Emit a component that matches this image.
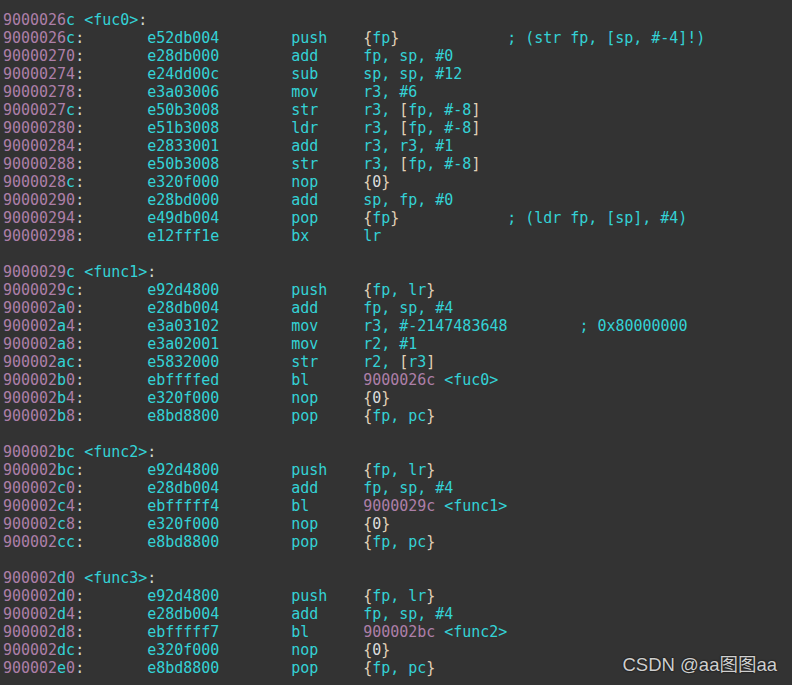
type Instr = {
  addr: string;
  bytes: string;
  mn: string;
  ops: string;
  target?: { addr: string; name: string };
  comment?: string;
  commentCol?: number;
};

type Block = { addr: string; name: string; rows: Instr[] };

const blocks: Block[] = [
  {
    addr: "9000026c",
    name: "fuc0",
    rows: [
      { addr: "9000026c", bytes: "e52db004", mn: "push", ops: "{fp}", comment: "; (str fp, [sp, #-4]!)", commentCol: 56 },
      { addr: "90000270", bytes: "e28db000", mn: "add", ops: "fp, sp, #0" },
      { addr: "90000274", bytes: "e24dd00c", mn: "sub", ops: "sp, sp, #12" },
      { addr: "90000278", bytes: "e3a03006", mn: "mov", ops: "r3, #6" },
      { addr: "9000027c", bytes: "e50b3008", mn: "str", ops: "r3, [fp, #-8]" },
      { addr: "90000280", bytes: "e51b3008", mn: "ldr", ops: "r3, [fp, #-8]" },
      { addr: "90000284", bytes: "e2833001", mn: "add", ops: "r3, r3, #1" },
      { addr: "90000288", bytes: "e50b3008", mn: "str", ops: "r3, [fp, #-8]" },
      { addr: "9000028c", bytes: "e320f000", mn: "nop", ops: "{0}" },
      { addr: "90000290", bytes: "e28bd000", mn: "add", ops: "sp, fp, #0" },
      { addr: "90000294", bytes: "e49db004", mn: "pop", ops: "{fp}", comment: "; (ldr fp, [sp], #4)", commentCol: 56 },
      { addr: "90000298", bytes: "e12fff1e", mn: "bx", ops: "lr" },
    ],
  },
  {
    addr: "9000029c",
    name: "func1",
    rows: [
      { addr: "9000029c", bytes: "e92d4800", mn: "push", ops: "{fp, lr}" },
      { addr: "900002a0", bytes: "e28db004", mn: "add", ops: "fp, sp, #4" },
      { addr: "900002a4", bytes: "e3a03102", mn: "mov", ops: "r3, #-2147483648", comment: "; 0x80000000", commentCol: 64 },
      { addr: "900002a8", bytes: "e3a02001", mn: "mov", ops: "r2, #1" },
      { addr: "900002ac", bytes: "e5832000", mn: "str", ops: "r2, [r3]" },
      { addr: "900002b0", bytes: "ebffffed", mn: "bl", ops: "", target: { addr: "9000026c", name: "fuc0" } },
      { addr: "900002b4", bytes: "e320f000", mn: "nop", ops: "{0}" },
      { addr: "900002b8", bytes: "e8bd8800", mn: "pop", ops: "{fp, pc}" },
    ],
  },
  {
    addr: "900002bc",
    name: "func2",
    rows: [
      { addr: "900002bc", bytes: "e92d4800", mn: "push", ops: "{fp, lr}" },
      { addr: "900002c0", bytes: "e28db004", mn: "add", ops: "fp, sp, #4" },
      { addr: "900002c4", bytes: "ebfffff4", mn: "bl", ops: "", target: { addr: "9000029c", name: "func1" } },
      { addr: "900002c8", bytes: "e320f000", mn: "nop", ops: "{0}" },
      { addr: "900002cc", bytes: "e8bd8800", mn: "pop", ops: "{fp, pc}" },
    ],
  },
  {
    addr: "900002d0",
    name: "func3",
    rows: [
      { addr: "900002d0", bytes: "e92d4800", mn: "push", ops: "{fp, lr}" },
      { addr: "900002d4", bytes: "e28db004", mn: "add", ops: "fp, sp, #4" },
      { addr: "900002d8", bytes: "ebfffff7", mn: "bl", ops: "", target: { addr: "900002bc", name: "func2" } },
      { addr: "900002dc", bytes: "e320f000", mn: "nop", ops: "{0}" },
      { addr: "900002e0", bytes: "e8bd8800", mn: "pop", ops: "{fp, pc}" },
    ],
  },
];

const pad = (s: string, n: number) => s + " ".repeat(Math.max(1, n - s.length));

// digits in mauve, hex letters in cyan
function Addr({ value }: { value: string }) {
  return (
    <>
      {value.split("").map((c, i) =>
        /[0-9]/.test(c) ? (
          <span key={i} className="text-[#ad7fa8]">{c}</span>
        ) : (
          <span key={i} className="text-[#34d2d6]">{c}</span>
        )
      )}
    </>
  );
}

function Ops({ value }: { value: string }) {
  if (value === "{0}") {
    return (
      <span className="text-[#e2d2b8]">
        {"{"}
        <span className="text-[#dcdcdc]">0</span>
        {"}"}
      </span>
    );
  }
  return (
    <>
      {value.split("").map((c, i) =>
        "[]{}".includes(c) ? (
          <span key={i} className="text-[#e2d2b8]">{c}</span>
        ) : (
          <span key={i}>{c}</span>
        )
      )}
    </>
  );
}

function Row({ r }: { r: Instr }) {
  const opsText = r.target ? `${r.target.addr} <${r.target.name}>` : r.ops;
  const tail = r.comment ? " ".repeat(Math.max(1, (r.commentCol ?? 56) - 40 - opsText.length)) : "";
  return (
    <div>
      <Addr value={r.addr} />
      <span className="text-[#d3d7cf]">:</span>
      {" ".repeat(16 - 9)}
      <span>{pad(r.bytes, 16)}</span>
      <span>{pad(r.mn, 8)}</span>
      {r.target ? (
        <>
          <span className="text-[#ad7fa8]">{r.target.addr}</span>
          <span>{` <${r.target.name}>`}</span>
        </>
      ) : (
        <Ops value={r.ops} />
      )}
      {r.comment && (
        <span>
          {tail}
          {r.comment}
        </span>
      )}
    </div>
  );
}

export default function App() {
  return (
    <div className="relative w-[792px] h-[685px] overflow-hidden bg-[#333333]">
      <div className="whitespace-pre pt-[11px] pl-[3px] font-['DejaVu_Sans_Mono',monospace] text-[15px] leading-[18px] tracking-[-0.03px] text-[#34d2d6]">
        {blocks.map((b, bi) => (
          <div key={b.addr}>
            {bi > 0 && <div>{" "}</div>}
            <div>
              <Addr value={b.addr} />
              <span>{` <${b.name}>`}</span>
              <span className="text-[#d3d7cf]">:</span>
            </div>
            {b.rows.map((r) => (
              <Row key={r.addr} r={r} />
            ))}
          </div>
        ))}
      </div>
      <div className="absolute right-[15px] bottom-[9px] font-['Liberation_Sans','Noto_Sans_CJK_SC',sans-serif] text-[18.5px] leading-[22px] text-[#cfcfcf] [text-shadow:0_0_2px_#000]">
        CSDN @aa图图aa
      </div>
    </div>
  );
}
